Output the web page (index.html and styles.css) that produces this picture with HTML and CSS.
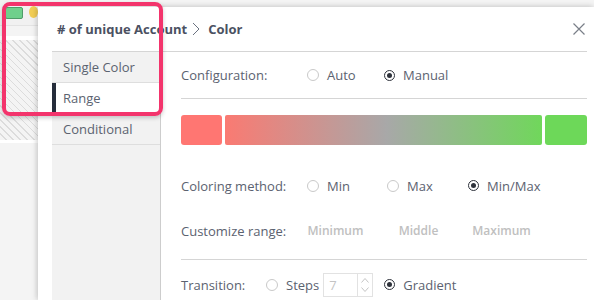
FILE: index.html
```html
<!DOCTYPE html>
<html lang="en">
<head>
  <meta charset="UTF-8">
  <meta name="viewport" content="width=device-width, initial-scale=1.0">
  <title>Color Settings</title>
  <link rel="stylesheet" href="styles.css">
</head>
<body>
  <div class="page">
    <div class="toolbar">
      <span class="swatch"></span>
      <span class="dot"></span>
    </div>
    <div class="band"></div>
    <div class="hatch"></div>
    <div class="band thin"></div>
  </div>

  <section class="panel">
    <header class="panel-head">
      <h1>
        # of unique Account
        <svg class="crumb" width="8" height="14" viewBox="0 0 8 14"><path d="M1 1l6 6-6 6" fill="none" stroke="#6b7280" stroke-width="1"/></svg>
        Color
      </h1>
      <button class="close" aria-label="Close">
        <svg width="12" height="12" viewBox="0 0 12 12"><path d="M0.5 0.5l11 11M11.5 0.5l-11 11" stroke="#7a7f88" stroke-width="1.2"/></svg>
      </button>
    </header>

    <div class="panel-body">
      <nav class="side">
        <a href="#">Single Color</a>
        <a href="#" class="active">Range</a>
        <a href="#">Conditional</a>
      </nav>

      <div class="content">
        <div class="row config">
          <span class="label">Configuration:</span>
          <label class="opt w77"><span class="radio"></span>Auto</label>
          <label class="opt"><span class="radio on"></span>Manual</label>
        </div>

        <div class="scale">
          <span class="stop min"></span>
          <span class="ramp"></span>
          <span class="stop max"></span>
        </div>

        <div class="row">
          <span class="label">Coloring method:</span>
          <label class="opt w80"><span class="radio"></span>Min</label>
          <label class="opt w81"><span class="radio"></span>Max</label>
          <label class="opt"><span class="radio on"></span>Min/Max</label>
        </div>

        <div class="row">
          <span class="label short">Customize range:</span>
          <span class="field">Minimum</span>
          <span class="field">Middle</span>
          <span class="field">Maximum</span>
        </div>

        <div class="row transition">
          <span class="label tiny">Transition:</span>
          <label class="opt"><span class="radio"></span>Steps</label>
          <span class="steps">
            <span class="steps-value">7</span>
            <span class="spin">
              <svg width="8" height="5" viewBox="0 0 8 5"><path d="M0.5 4.5l3.5-4 3.5 4" fill="none" stroke="#c4c4c4"/></svg>
              <svg width="8" height="5" viewBox="0 0 8 5"><path d="M0.5 0.5l3.5 4 3.5-4" fill="none" stroke="#c4c4c4"/></svg>
            </span>
          </span>
          <label class="opt"><span class="radio on"></span>Gradient</label>
        </div>
      </div>
    </div>
  </section>

  <div class="callout"></div>
</body>
</html>
```

FILE: styles.css
```css
body {
  margin: 0;
  width: 594px;
  height: 300px;
  overflow: hidden;
  background-color: #f4f4f4;
  font-family: "Open Sans", Arial, sans-serif;
  font-size: 13px;
  color: #5b6270;
}

/* page behind the dialog */
.page {
  width: 38px;
}

.toolbar {
  height: 18px;
  padding: 7px 0 0 5px;
  border-bottom: 1px solid #e3e3e3;
  display: flex;
  gap: 6px;
  background: #f1f1f1;
}

.swatch {
  width: 22px;
  height: 10px;
  background: #6fd08c;
  border: 1px solid #4f9c69;
  border-radius: 2px;
}

.dot {
  width: 12px;
  height: 12px;
  margin-top: -1px;
  border-radius: 50%;
  background: #f1cd55;
}

.band {
  height: 4px;
  margin-top: 10px;
  background: #fff;
}

.band.thin {
  height: 3px;
  margin-top: 0;
}

.hatch {
  height: 100px;
  background: repeating-linear-gradient(45deg, #f4f4f4 0 4px, #dcdcdc 4px 5px);
}

/* dialog */
.panel {
  position: absolute;
  left: 38px;
  top: 7px;
  right: 0;
  bottom: 0;
  padding: 0 7px 0 14px;
  background: #fff;
  box-shadow: -2px 0 5px rgba(0, 0, 0, 0.13), 0 -2px 5px rgba(0, 0, 0, 0.07);
}

.panel-head {
  height: 44px;
  padding-left: 5px;
  border-bottom: 1px solid #d5d5d5;
  display: flex;
  align-items: center;
  justify-content: space-between;
}

.panel-head h1 {
  margin: 0;
  font-size: 13px;
  font-weight: 700;
  color: #4b5162;
  display: flex;
  align-items: center;
}

.crumb {
  margin: 0 8px 0 5px;
}

.close {
  border: none;
  background: none;
  padding: 0;
  margin-right: 2px;
  display: flex;
}

.panel-body {
  display: flex;
  height: calc(100% - 45px);
}

.side {
  width: 108px;
  background: #f2f2f2;
  border-right: 1px solid #cdcdcd;
}

.side a {
  display: block;
  height: 30px;
  line-height: 30px;
  padding-left: 11px;
  border-bottom: 1px solid #dedede;
  color: #5b6270;
  text-decoration: none;
}

.side a.active {
  background: #fff;
  box-shadow: inset 4px 0 #262d3b;
}

.content {
  flex: 1;
  padding-left: 20px;
}

.row {
  height: 45px;
  display: flex;
  align-items: center;
}

.row.config {
  height: 46px;
  border-bottom: 1px solid #d5d5d5;
}

.row.transition {
  height: 49px;
  margin-top: 6px;
  border-top: 1px solid #d5d5d5;
}

.label {
  width: 126px;
  flex-shrink: 0;
}

.label.short {
  width: 113px;
}

.label.tiny {
  width: 85px;
}

.opt {
  display: inline-flex;
  align-items: center;
}

.w77 { width: 77px; }
.w80 { width: 80px; }
.w81 { width: 81px; }

.radio {
  width: 10px;
  height: 10px;
  margin-right: 8px;
  border: 1px solid #c9c9c9;
  border-radius: 50%;
  background: #fff;
  position: relative;
}

.radio.on {
  border: 1.5px solid #2e323b;
  width: 9px;
  height: 9px;
}

.radio.on::after {
  content: "";
  position: absolute;
  left: 2px;
  top: 2px;
  width: 5px;
  height: 5px;
  border-radius: 50%;
  background: #2e323b;
}

/* colour scale */
.scale {
  display: flex;
  gap: 3px;
  height: 30px;
  margin: 16px 0 18px;
}

.stop {
  width: 41px;
  border-radius: 3px;
}

.stop.min { background: #ff7672; }
.stop.max { width: 42px; background: #6dd859; }

.ramp {
  flex: 1;
  border-radius: 2px;
  background: linear-gradient(to right, #fa7a72, #a8a8a8 51%, #70d75b);
}

.field {
  width: 83px;
  text-align: center;
  font-size: 12px;
  color: #c0c0c0;
  font-weight: 600;
}

.steps {
  display: flex;
  width: 48px;
  height: 22px;
  margin: 0 11px 0 4px;
  border: 1px solid #e2e2e2;
}

.steps-value {
  flex: 1;
  padding-left: 5px;
  line-height: 22px;
  color: #c4c4c4;
}

.spin {
  width: 14px;
  border-left: 1px solid #e2e2e2;
  display: flex;
  flex-direction: column;
  justify-content: space-around;
  align-items: center;
  padding: 2px 0;
}

/* annotation frame over the screenshot */
.callout {
  position: absolute;
  left: 2px;
  top: 2px;
  width: 153px;
  height: 106px;
  border: 4px solid #f3346c;
  border-radius: 8px;
  box-shadow: 0 2px 4px rgba(0, 0, 0, 0.2);
}
```
